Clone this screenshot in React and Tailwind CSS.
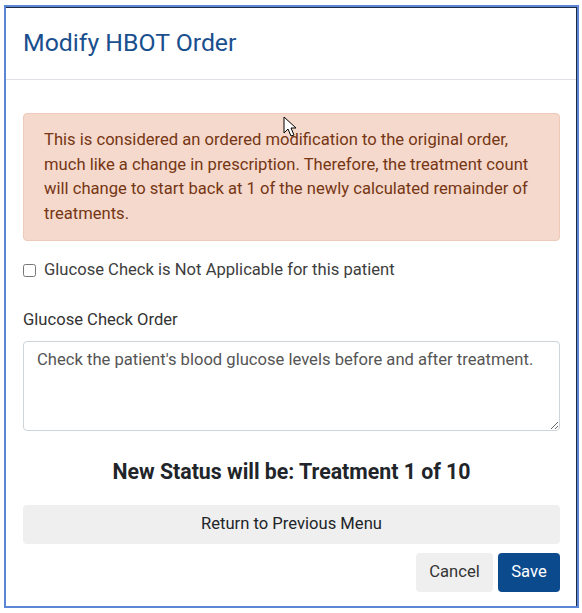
import React from 'react';

function Cursor() {
    return (
        <svg className="absolute left-[283px] top-[116px]" width="16" height="22" viewBox="0 0 16 22">
            <path d="M1 1 L1 17 L5 13 L8 20 L11 19 L8 12 L13 12 Z" fill="white" stroke="black" strokeWidth="1" strokeLinejoin="round" />
        </svg>
    );
}

export default function App() {
    return (
        <div className="relative w-[582px] h-[613px] bg-white font-['Roboto','Liberation_Sans',sans-serif]">
            <div className="absolute left-[4px] top-[5px] w-[575px] h-[603px] border-2 border-[#5b86d6]">
                <div className="h-full border-t border-r border-[#1f2b44] flex flex-col">
                    {/* Header */}
                    <div className="h-[72px] pl-[17px] pr-[16px] flex items-center border-b border-[#dee2e6]">
                        <h1 className="text-[24.8px] leading-[36px] text-[#1a4f8e] mt-[-2px]">Modify HBOT Order</h1>
                    </div>

                    {/* Body */}
                    <div className="pl-[17px] pr-[16px] pt-[33px]">
                        <div className="rounded-[4px] border border-[#efcab8] bg-[#f4d9cc] px-[20px] py-[14px] text-[16.6px] leading-[24.5px] text-[#763614]">
                            This is considered an ordered modification to the original order, much like a change in prescription. Therefore, the treatment count will change to start back at 1 of the newly calculated remainder of treatments.
                        </div>

                        <label className="mt-[17px] flex items-center h-[24px] text-[16.6px] text-[#3d3d3d]">
                            <input type="checkbox" className="w-[13px] h-[13px] m-0 mr-[8px]" />
                            Glucose Check is Not Applicable for this patient
                        </label>

                        <div className="mt-[26px] h-[24px] leading-[24px] text-[16.6px] text-[#333]">Glucose Check Order</div>

                        <textarea
                            className="mt-[9px] block w-full h-[90px] rounded-[4px] border border-[#ced4da] px-[13px] py-[6px] text-[16.6px] leading-[24px] text-[#555] resize-y outline-none"
                            defaultValue="Check the patient's blood glucose levels before and after treatment."
                        />

                        <div className="mt-[29px] h-[24px] leading-[24px] text-center text-[21.3px] font-bold text-[#212529]">
                            New Status will be: Treatment 1 of 10
                        </div>

                        <button className="mt-[21px] w-full h-[39px] rounded-[4px] bg-[#efefef] text-[16.6px] text-[#212529]">
                            Return to Previous Menu
                        </button>

                        <div className="mt-[9px] flex justify-end gap-[5px]">
                            <button className="w-[77px] h-[39px] rounded-[4px] bg-[#efefef] text-[16.6px] text-[#333]">Cancel</button>
                            <button className="w-[62px] h-[39px] rounded-[4px] bg-[#0c4a8e] text-[16.6px] text-white">Save</button>
                        </div>
                    </div>
                </div>
            </div>
            <Cursor />
        </div>
    );
}
